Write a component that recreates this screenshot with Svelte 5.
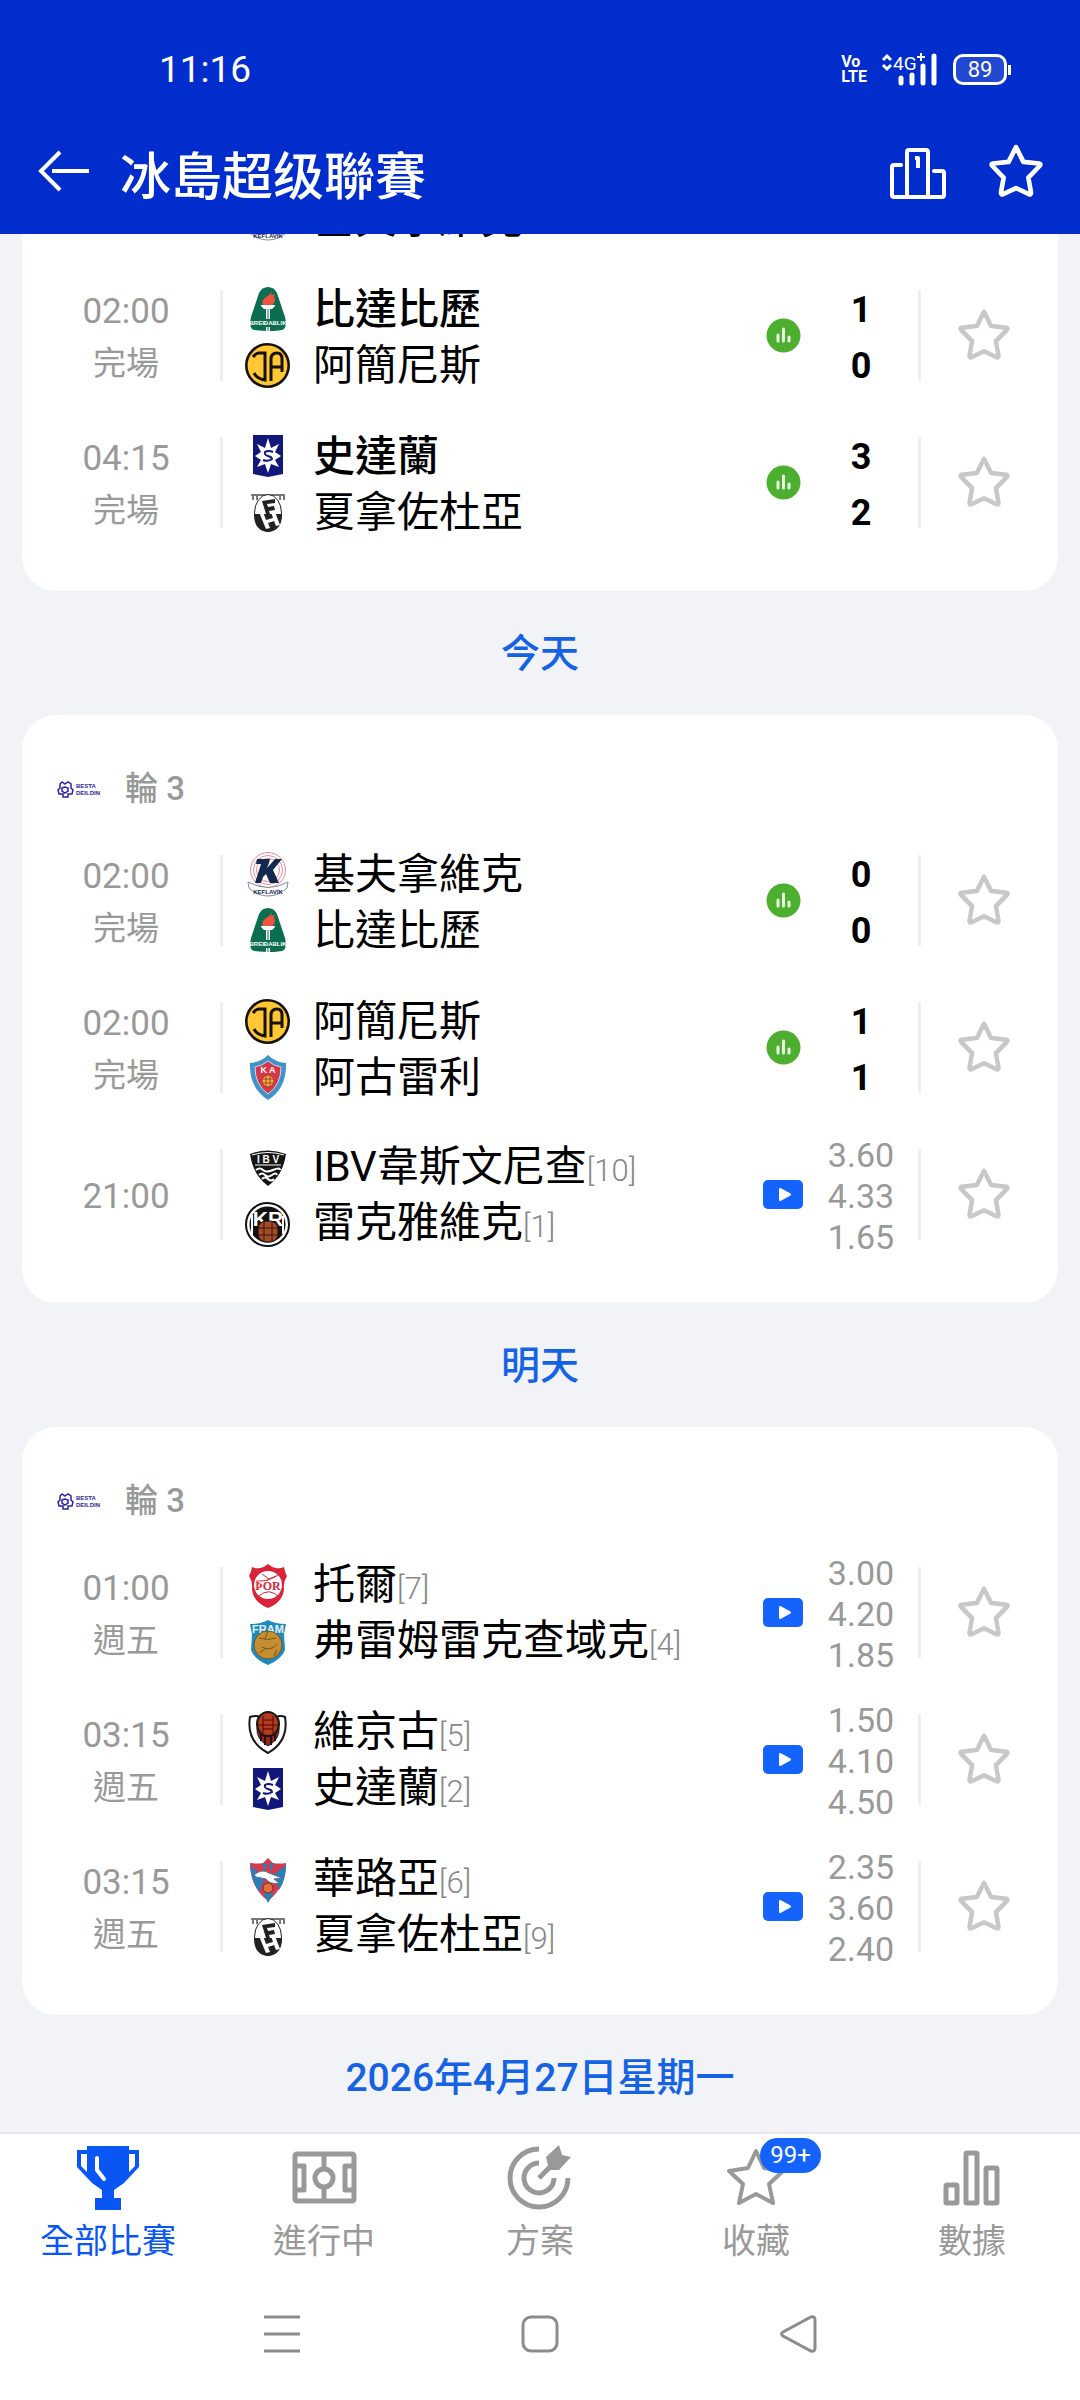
<script lang="ts">
	type Team = { name: string; crest: string; rank?: number; won?: boolean };
	type Match = { time?: string; note?: string; home?: Team; away: Team; score?: number[]; odds?: string[] };
	type Day = { round?: number; matches: Match[]; next: string };

	const days: Day[] = [
		{
			matches: [
				{ away: { name: '基夫拿維克', crest: 'keflavik', won: true } },
				{ time: '02:00', note: '完場', home: { name: '比達比歷', crest: 'breidablik', won: true }, away: { name: '阿簡尼斯', crest: 'ia' }, score: [1, 0] },
				{ time: '04:15', note: '完場', home: { name: '史達蘭', crest: 'stjarnan', won: true }, away: { name: '夏拿佐杜亞', crest: 'fh' }, score: [3, 2] },
			],
			next: '今天',
		},
		{
			round: 3,
			matches: [
				{ time: '02:00', note: '完場', home: { name: '基夫拿維克', crest: 'keflavik' }, away: { name: '比達比歷', crest: 'breidablik' }, score: [0, 0] },
				{ time: '02:00', note: '完場', home: { name: '阿簡尼斯', crest: 'ia' }, away: { name: '阿古雷利', crest: 'ka' }, score: [1, 1] },
				{ time: '21:00', home: { name: 'IBV韋斯文尼查', crest: 'ibv', rank: 10 }, away: { name: '雷克雅維克', crest: 'kr', rank: 1 }, odds: ['3.60', '4.33', '1.65'] },
			],
			next: '明天',
		},
		{
			round: 3,
			matches: [
				{ time: '01:00', note: '週五', home: { name: '托爾', crest: 'thor', rank: 7 }, away: { name: '弗雷姆雷克查域克', crest: 'fram', rank: 4 }, odds: ['3.00', '4.20', '1.85'] },
				{ time: '03:15', note: '週五', home: { name: '維京古', crest: 'vikingur', rank: 5 }, away: { name: '史達蘭', crest: 'stjarnan', rank: 2 }, odds: ['1.50', '4.10', '4.50'] },
				{ time: '03:15', note: '週五', home: { name: '華路亞', crest: 'valur', rank: 6 }, away: { name: '夏拿佐杜亞', crest: 'fh', rank: 9 }, odds: ['2.35', '3.60', '2.40'] },
			],
			next: '2026年4月27日星期一',
		},
	];

	const tabs = [
		{ id: 'all', label: '全部比賽' },
		{ id: 'live', label: '進行中' },
		{ id: 'tips', label: '方案' },
		{ id: 'fav', label: '收藏', badge: '99+' },
		{ id: 'stats', label: '數據' },
	];

	let active = $state('all');
	let starred = $state<Record<string, boolean>>({});
</script>

{#snippet starPath()}
	<path d="M24 4.5 30.3 17.2 43.8 18.6Q45.6 19 44.4 20.5L34.6 30.6 36.9 43.6Q36.8 45.6 35 44.9L24 39.6 13 44.9Q11.2 45.6 11.1 43.6L13.4 30.6 3.6 20.5Q2.4 19 4.2 18.6L17.7 17.2Z" />
{/snippet}

{#snippet crest(id: string)}
	<svg class="crest" viewBox="0 0 45 45" aria-hidden="true">
		{#if id === 'keflavik'}
			<g fill="none" stroke="#e08a98" stroke-width="1">
				<circle cx="23" cy="18" r="17.5" />
				<circle cx="23" cy="18" r="14.5" />
				<circle cx="23" cy="18" r="11.5" />
			</g>
			<path d="M12 7h13l-1 4-2 5 8-9h7l-9 11 6 13h-9l-4-9-3 3-2 6h-6l6-19h-5z" fill="#13284f" />
			<path d="M3 30q20 11 40 0l-1 6q-8 8-19 8T4 36z" fill="#fff" stroke="#7d8cab" stroke-width="1" />
			<text class="mark" x="23" y="42" font-size="6" fill="#13284f" text-anchor="middle">KEFLAVÍK</text>
		{:else if id === 'breidablik'}
			<path d="M23 0q6 0 9 6l8 24q2 9-1 12-3 2-16 2T7 42q-3-3-1-12l8-24q3-6 9-6z" fill="#0b6e4f" />
			<path d="M18 18q-2-5 3-8 4-2 6-6l-1 4 4-1q-2 3 0 5 0 4-3 6z" fill="#ef5340" />
			<path d="M16 18h14v1l-3 3h-8l-3-3zM21 22h4v22h-4z" fill="#fff" />
			<path d="M23 22v22" stroke="#0b6e4f" stroke-width="1" />
			<path d="M6 32h34v8H6z" fill="#0b6e4f" />
			<text class="mark" x="23" y="38" font-size="6" fill="#fff" text-anchor="middle">BREIÐABLIK</text>
		{:else if id === 'ia'}
			<circle cx="22.5" cy="22.5" r="21.2" fill="#ffc734" stroke="#17110c" stroke-width="2.6" />
			<path d="M8 14q3-4 6-4h6v27q-8-1-11-7M26 38V16q0-6 6-6 5 0 5 6v13M26 24h11" fill="none" stroke="#17110c" stroke-width="3" />
		{:else if id === 'ka'}
			<path d="M23 0q7 7 18 8 1 25-18 37Q4 33 5 8 16 7 23 0z" fill="#3f93c9" />
			<path d="M23 6q6 5 13 6 0 18-13 27Q10 30 10 12q7-1 13-6z" fill="#d8344a" stroke="#c9d9e8" stroke-width="1" />
			<circle cx="23" cy="26" r="6" fill="#f3b23c" stroke="#a8402c" stroke-width="1" />
			<path d="M17 24h12M17 28h12M21 20v12M25 20v12" stroke="#a8402c" stroke-width="1" />
			<text class="mark" x="23" y="18" font-size="9" fill="#fff" text-anchor="middle">K A</text>
		{:else if id === 'ibv'}
			<path d="M5 8q18-7 36 0-3 21-18 32Q8 29 5 8z" fill="#151515" />
			<path d="M7 9q16-5 32 0M10 19h26" fill="none" stroke="#fff" stroke-width="1" />
			<text class="mark" x="23" y="17" font-size="10" fill="#fff" text-anchor="middle">I B V</text>
			<path d="M11 24q4-3 7 0t10 0 7 0M14 29q3-3 6 0t7 0 5 0M17 33q3-3 6 0t6 0" fill="none" stroke="#fff" stroke-width="2" />
		{:else if id === 'kr'}
			<circle cx="22.5" cy="22.5" r="21.5" fill="#fff" stroke="#111" stroke-width="2" />
			<circle cx="22.5" cy="22.5" r="18" fill="#111" />
			<path d="M7 13v20M38 14v18" stroke="#fff" stroke-width="2" />
			<text class="mark" x="23" y="24" font-size="21" fill="#fff" text-anchor="middle">KR</text>
			<rect x="13" y="19" width="20" height="21" rx="8" fill="#a44a26" stroke="#111" stroke-width="1" />
			<path d="M13 26h20M13 33h20M19 20v20M27 20v20" stroke="#3a150a" stroke-width="1" />
		{:else if id === 'thor'}
			<path d="M23 0q3 3 8 4 4 1 8-1 1 6 3 9-4 6-3 13-1 13-16 19Q8 38 7 25 8 18 4 12q2-3 3-9 4 2 8 1 5-1 8-4z" fill="#d8233a" />
			<circle cx="23" cy="21" r="14" fill="#fff" />
			<path d="M11 17q12 1 22-6M14 32q10-9 20 1M17 10l7 5 7-3" fill="none" stroke="#d8233a" stroke-width="1" />
			<text class="mark serif" x="23" y="26" font-size="12" fill="#d8233a" text-anchor="middle">ÞÓR</text>
		{:else if id === 'fram'}
			<path d="M23 0q7 4 18 4l-2 10 1 16q-3 9-17 15Q9 39 6 30l1-16L5 4q11 0 18-4z" fill="#1f8ac0" />
			<text class="mark" x="23" y="13" font-size="11" fill="#e4f5fc" text-anchor="middle">FRAM</text>
			<circle cx="23" cy="25" r="14" fill="#c48e31" stroke="#70551f" stroke-width="1" />
			<path d="M14 18q9 3 17 0M17 27q9 5 15-3M14 33l6-4M23 11l-3 8M29 36l3-6" fill="none" stroke="#70551f" stroke-width="1" />
		{:else if id === 'vikingur'}
			<path d="M5 6q6-2 10 0h16q5-2 9 0 4 24-17 36Q1 30 5 6z" fill="#fff" stroke="#171717" stroke-width="2" />
			<path d="M12 17h22q1 11-11 18-12-7-11-18z" fill="#9e2314" stroke="#171717" stroke-width="1" />
			<path d="M16 20v10M20 20v14M26 20v14M30 20v10" stroke="#171717" stroke-width="2" />
			<ellipse cx="23" cy="13" rx="11" ry="12" fill="#b8391b" stroke="#171717" stroke-width="2" />
			<path d="M18 5v17M28 5v17M18 9h10M12 14h22M18 18h10" stroke="#3c0e07" stroke-width="1" />
		{:else if id === 'stjarnan'}
			<path d="M8 1h30v39l-15 3-15-3z" fill="#12187a" />
			<path d="m23 4 3 10 8-4-4 8 6 4-6 4 4 7-8-3-3 9-3-9-8 3 4-7-6-4 6-4-4-8 8 4z" fill="#fff" />
			<path d="M28 18q-5-2-8 0-1 3 3 4t4 3q-4 3-9 1" fill="none" stroke="#12187a" stroke-width="2" />
		{:else if id === 'valur'}
			<path d="m23 0 5 5q6 1 13 0 0 24-18 38Q5 29 5 5q7 1 13 0z" fill="#d83a4c" />
			<path d="M5 7 20 20 14 34Q6 22 5 7zM41 7 29 16l5 16q7-10 7-25zM17 5l3 9 2-8zM29 5l-3 9-2-8zM18 34l5 11 6-10z" fill="#2e7cb8" />
			<path d="M9 17q8-7 15-2l13 5-8 1 5 4q-9 2-13-4l-10-2z" fill="#fff" stroke="#54708c" stroke-width="1" />
			<circle cx="23" cy="30" r="5" fill="#e2703a" stroke="#7a2b1c" stroke-width="1" />
		{:else if id === 'fh'}
			<path d="M6 4h34v2H6zM7 6h2v4H7zM11 6h2v4h-2zM34 6h2v4h-2zM38 6h2v4h-2z" fill="#777" />
			<ellipse cx="23" cy="23" rx="13.500" ry="18.500" fill="#fff" stroke="#222" stroke-width="1" />
			<path d="M9 24h28q0 17-14 18Q9 41 9 24z" fill="#222" />
			<path d="M17 11 30 9v4l-8 1 1 3 6-1 1 4-6 1 1 3h-4z" fill="#222" />
			<path d="M14 22h4l3 8 7-2-2-6h4l5 13-4 1-2-5-6 2 2 5-4 1z" fill="#fff" />
		{/if}
	</svg>
{/snippet}

<div class="app">
	<header>
		<div class="status">
			<span class="clock">11:16</span>
			<div class="signals">
				<span class="volte">Vo<br />LTE</span>
				<svg class="signal" width="58" height="32" viewBox="0 0 58 32" aria-label="4G+">
					<path d="m2 7 4-4 4 4M2 12l4 4 4-4" fill="none" stroke="#fff" stroke-width="3" />
					<text x="12" y="17" font-size="19" fill="#fff">4G</text>
					<path d="M36 4h8M40 0v8" stroke="#fff" stroke-width="2" />
					<path d="M20 25v5M31 22v8M42 13v17M53 3v27" stroke="#fff" stroke-width="5" stroke-linecap="round" />
				</svg>
				<span class="battery">89</span>
			</div>
		</div>
		<div class="titlebar">
			<button class="back" aria-label="返回">
				<svg width="52" height="44" viewBox="0 0 52 44" fill="none" stroke="#fff" stroke-width="4">
					<path d="M22 3 3 22l19 19M14 22h37" />
				</svg>
			</button>
			<h1>冰島超级聯賽</h1>
			<button aria-label="排名">
				<svg width="56" height="56" viewBox="0 -4 56 56" fill="none" stroke="#fff" stroke-width="4" stroke-linejoin="round" stroke-linecap="round">
					<path d="M17 50V5q0-2 2-2h17q2 0 2 2v45M11 18H4q-2 0-2 2v28q0 2 2 2h48q2 0 2-2V26q0-2-2-2h-8" />
					<path d="M25 11h3v10" stroke-linecap="butt" />
				</svg>
			</button>
			<button aria-label="收藏聯賽">
				<svg width="56" height="56" viewBox="0 1 48 48" fill="none" stroke="#fff" stroke-width="4" stroke-linejoin="round">
					{@render starPath()}
				</svg>
			</button>
		</div>
	</header>

	<main>
		{#each days as day, d}
			<section class="card">
				{#if day.round}
					<div class="round">
						<svg class="league" width="46" height="18" viewBox="0 0 46 18" aria-hidden="true">
							<path d="m8 4 3-2 3 2v4l2 2-1 4h-4v3H6v-3H2l-1-4 2-2V4l2-2zM5 8l3-1 3 1v3l-3 2-3-2z" fill="none" stroke="#2a23a5" stroke-width="1.500" />
							<text class="mark" x="19" y="8" font-size="6" fill="#2a23a5">BESTA</text>
							<text class="mark" x="19" y="15" font-size="6" fill="#2a23a5">DEILDIN</text>
						</svg>
						<h2>輪 {day.round}</h2>
					</div>
				{/if}
				{#each day.matches as match, m}
					<article class="match">
						<div class="time">
							{#if match.time}<span>{match.time}</span>{/if}
							{#if match.note}<span>{match.note}</span>{/if}
						</div>
						<div class="teams">
							{#each [match.home, match.away] as team}
								<div class="team" class:won={team?.won}>
									{#if team}
										{@render crest(team.crest)}
										<span class="name">{team.name}{#if team.rank}<small>[{team.rank}]</small>{/if}</span>
									{/if}
								</div>
							{/each}
						</div>
						<div class="media">
							{#if match.score}
								<svg width="35" height="35" viewBox="0 0 35 35" role="img" aria-label="統計">
									<circle cx="17.500" cy="17.500" r="17" fill="#4caf2f" />
									<path d="M12 17v6M17.500 11v12M23 19v4" stroke="#e9ffe0" stroke-width="3" stroke-linecap="round" />
								</svg>
							{:else if match.odds}
								<svg width="40" height="29" viewBox="0 0 40 29" role="img" aria-label="直播">
									<rect width="40" height="29" rx="5" fill="#1463ff" />
									<path d="M17 9v11l10-5.500z" fill="#fff" stroke="#fff" stroke-width="2" stroke-linejoin="round" />
								</svg>
							{/if}
						</div>
						<div class="result" class:odds={match.odds}>
							{#each match.score ?? match.odds ?? [] as value}
								<span>{value}</span>
							{/each}
						</div>
						<button
							class="star"
							class:on={starred[`${d}-${m}`]}
							aria-label="收藏"
							onclick={() => (starred[`${d}-${m}`] = !starred[`${d}-${m}`])}
						>
							<svg width="54" height="54" viewBox="0 2 48 48" stroke-width="4" stroke-linejoin="round">
								{@render starPath()}
							</svg>
						</button>
					</article>
				{/each}
			</section>
			<h3 class="day">{day.next}</h3>
		{/each}
	</main>

	<nav class="tabs">
		{#each tabs as tab}
			<button class="tab" class:active={active === tab.id} onclick={() => (active = tab.id)}>
				<span class="icon">
					<svg width="66" height="66" viewBox="0 0 66 66" fill="none" stroke="currentColor" stroke-width="5" stroke-linejoin="round">
						{#if tab.id === 'all'}
							<path d="M12 1h42v4h10v17L49 38 39 45v8h7v12H20V53h7v-8l-10-7L2 22V5h10zM12 9H6v12l6 6zM54 9v18l6-6V9z" fill="currentColor" fill-rule="evenodd" stroke="none" />
							<path d="M22 13v12l7 9" stroke="#fff" stroke-width="4" stroke-linecap="round" />
						{:else if tab.id === 'live'}
							<rect x="4" y="9" width="59" height="47" rx="2" />
							<path d="M33 9v14M33 42v14M4 21h9v24H4M63 21h-9v24h9" />
							<circle cx="33" cy="33" r="9" />
						{:else if tab.id === 'tips'}
							<path d="M32 4A29 29 0 1 0 61 33M32 18A15 15 0 1 0 47 33" stroke-width="5" />
							<path d="M32 33 46 19" stroke-width="5" />
							<path d="m39 12 13-12 3 10 9 2-12 13H42z" fill="currentColor" stroke="none" />
						{:else if tab.id === 'fav'}
							<path d="m33 6 8 17 19 3-14 13 4 19-17-9-17 9 4-19L6 26l19-3z" stroke-width="4" />
						{:else}
							<rect x="7" y="40" width="11" height="18" rx="1" />
							<rect x="27" y="8" width="11" height="50" rx="1" />
							<rect x="47" y="23" width="11" height="35" rx="1" />
						{/if}
					</svg>
					{#if tab.badge}<span class="badge">{tab.badge}</span>{/if}
				</span>
				{tab.label}
			</button>
		{/each}
	</nav>

	<div class="system">
		<button aria-label="最近">
			<svg width="36" height="38" viewBox="0 0 36 38"><path d="M0 2h36M0 19h36M0 36h36" /></svg>
		</button>
		<button aria-label="主頁">
			<svg width="36" height="38" viewBox="0 0 36 38"><rect x="1" y="2" width="34" height="34" rx="8" /></svg>
		</button>
		<button aria-label="上一頁">
			<svg width="36" height="38" viewBox="0 0 36 38"><path d="M31 2q4-1 4 3v28q0 4-4 3L3 21q-3-2 0-4z" /></svg>
		</button>
	</div>
</div>

<style>
	:global(body) {
		margin: 0;
	}
	.app {
		height: 100vh;
		display: flex;
		flex-direction: column;
		background: #f1f3f7;
		font-family: Roboto, 'Noto Sans CJK TC', sans-serif;
		color: #000;
	}
	button {
		padding: 0;
		border: 0;
		background: none;
		font: inherit;
		color: inherit;
		cursor: pointer;
	}
	svg {
		display: block;
		overflow: visible;
	}
	h1, h2, h3 {
		margin: 0;
		font-weight: 500;
	}
	.mark {
		font-family: 'Liberation Sans', sans-serif;
		font-weight: 700;
	}
	.mark.serif {
		font-family: 'Liberation Serif', serif;
	}

	header {
		position: relative;
		z-index: 1;
		flex-shrink: 0;
		background: #002dcb;
		color: #fff;
	}
	.status {
		height: 114px;
		padding: 24px 73px 0 159px;
		box-sizing: border-box;
		display: flex;
		align-items: center;
		justify-content: space-between;
	}
	.clock {
		font-size: 37px;
	}
	.signals {
		display: flex;
		align-items: center;
		gap: 14px;
	}
	.volte {
		font-size: 16px;
		line-height: 15px;
		font-weight: 700;
	}
	.battery {
		position: relative;
		width: 54px;
		height: 31px;
		box-sizing: border-box;
		border: 3px solid #fff;
		border-radius: 10px;
		background: #2348d2;
		font-size: 22px;
		line-height: 25px;
		text-align: center;
	}
	.battery::after {
		content: '';
		position: absolute;
		right: -7px;
		top: 8px;
		width: 3px;
		height: 10px;
		background: #fff;
	}
	.titlebar {
		height: 120px;
		padding: 0 36px 6px 38px;
		box-sizing: border-box;
		display: flex;
		align-items: center;
		gap: 42px;
	}
	.back {
		margin-right: -12px;
	}
	h1 {
		flex: 1;
		padding-top: 14px;
		font-size: 51px;
		line-height: 60px;
	}

	main {
		flex: 1;
		min-height: 0;
		overflow: hidden;
	}
	.card {
		margin: 0 22px;
		padding: 36px 11px 35px 10px;
		border-radius: 34px;
		background: #fff;
	}
	/* first card is scrolled up under the header */
	.card:first-child {
		margin-top: -155px;
	}
	.round {
		height: 76px;
		padding-left: 25px;
		display: flex;
		align-items: center;
		gap: 22px;
		color: #999;
	}
	h2 {
		font-size: 33px;
		line-height: 48px;
	}
	.match {
		height: 147px;
		display: flex;
		align-items: center;
	}
	.time,
	.teams,
	.result {
		box-sizing: border-box;
		padding-top: 4px;
		display: flex;
		flex-direction: column;
	}
	.time {
		width: 188px;
		align-items: center;
		font-size: 35px;
		line-height: 52px;
		color: #999;
	}
	.time span + span {
		font-size: 33px;
	}
	.teams {
		flex: 1;
		height: 91px;
		padding-left: 22px;
		border-left: 3px solid #efefef;
		justify-content: center;
	}
	.team {
		display: flex;
		align-items: center;
		gap: 23px;
		height: 56px;
		flex-shrink: 0;
		font-size: 42px;
		line-height: 56px;
		white-space: nowrap;
	}
	.won {
		font-weight: 500;
	}
	.crest {
		width: 45px;
		height: 45px;
		flex-shrink: 0;
	}
	small {
		font-size: 31px;
		font-weight: 300;
		color: #888;
	}
	.media {
		width: 54px;
		display: flex;
		justify-content: center;
	}
	.result {
		width: 102px;
		margin-right: 6px;
		align-items: center;
		font-size: 36px;
		line-height: 56px;
		font-weight: 700;
	}
	.odds {
		font-size: 34px;
		line-height: 41px;
		font-weight: 400;
		color: #999;
	}
	.star {
		width: 129px;
		height: 91px;
		border-left: 3px solid #efefef;
		display: flex;
		align-items: center;
		justify-content: center;
		color: #c8c8c8;
	}
	.star svg {
		fill: none;
		stroke: currentColor;
	}
	.star.on {
		color: #ffb400;
	}
	.day {
		padding-top: 3px;
		font-size: 39px;
		line-height: 121px;
		text-align: center;
		color: #1662e4;
	}

	.tabs {
		position: relative;
		height: 136px;
		flex-shrink: 0;
		box-sizing: border-box;
		border-top: 2px solid #e8e8e8;
		background: #fff;
		display: flex;
	}
	.tab {
		flex: 1;
		padding-top: 11px;
		display: flex;
		flex-direction: column;
		align-items: center;
		font-size: 34px;
		line-height: 60px;
		color: #999;
	}
	.tab.active {
		color: #0a56f5;
	}
	.icon {
		position: relative;
	}
	.badge {
		position: absolute;
		left: 37px;
		top: -7px;
		width: 61px;
		height: 35px;
		border-radius: 18px;
		background: #1463ff;
		color: #fff;
		font-size: 24px;
		line-height: 35px;
	}
	.system {
		height: 132px;
		flex-shrink: 0;
		background: #fff;
		display: flex;
		align-items: center;
		justify-content: center;
		gap: 222px;
	}
	.system svg {
		fill: none;
		stroke: #8c8c8c;
		stroke-width: 3px;
	}
</style>
